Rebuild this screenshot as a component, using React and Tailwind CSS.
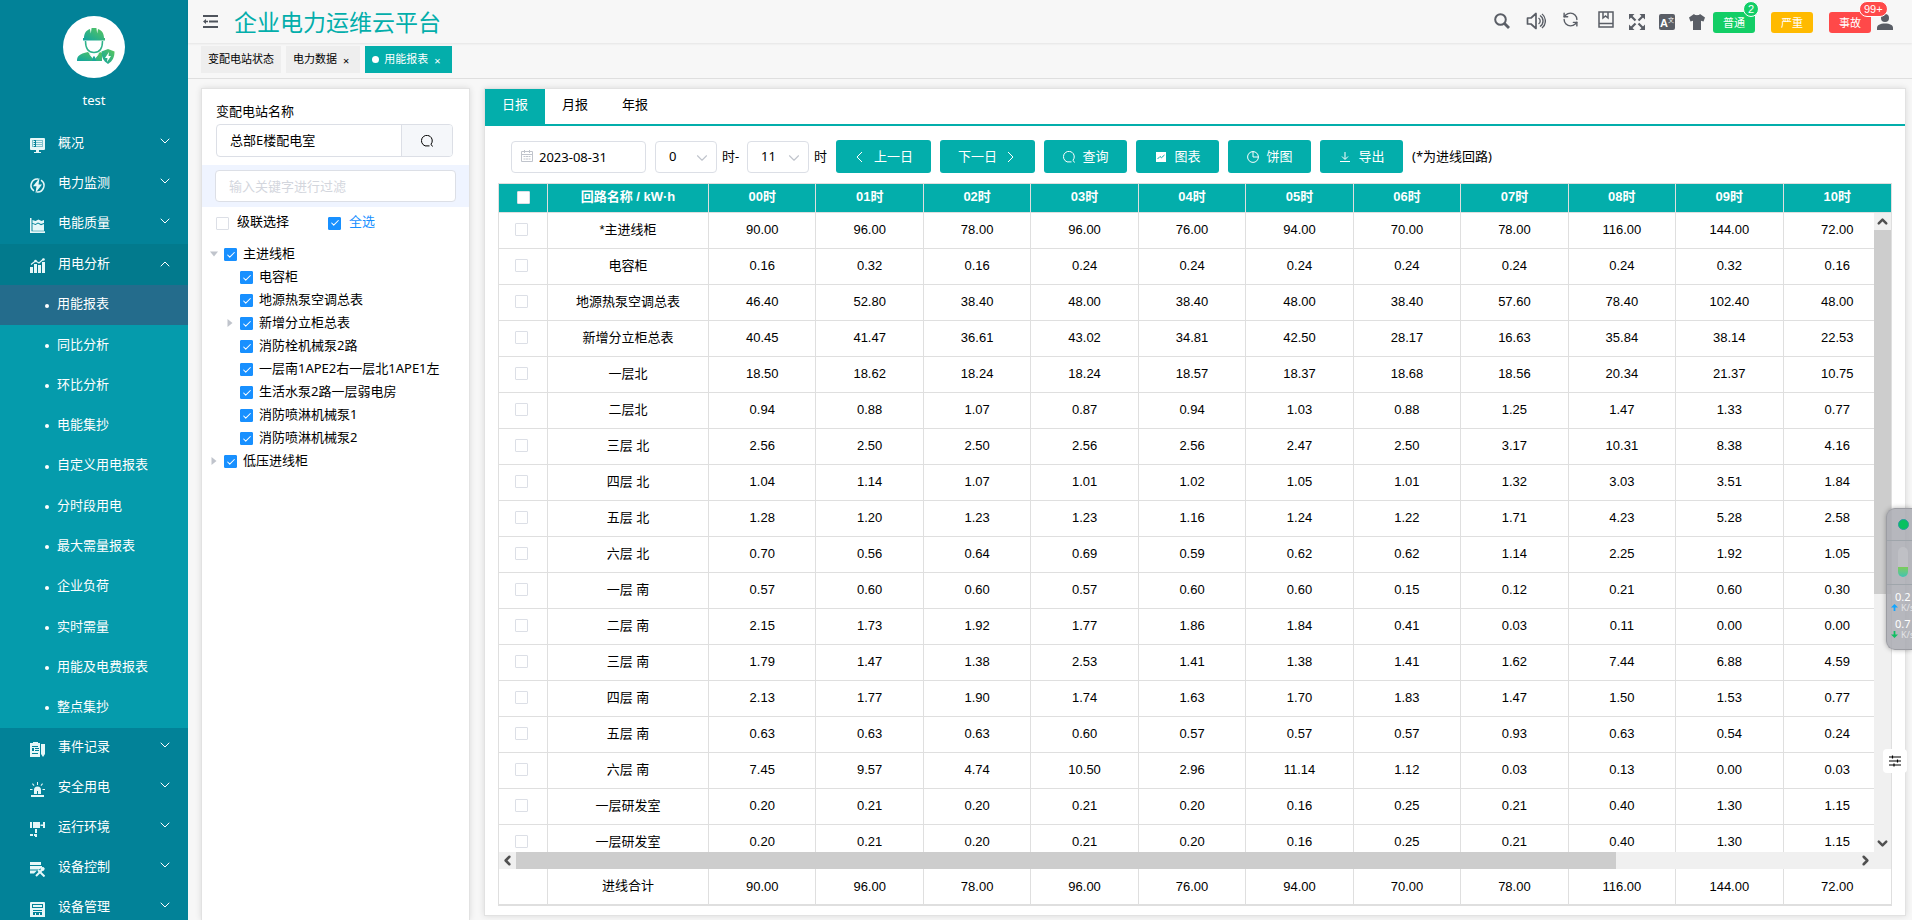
import React, { useState } from "react";
import { ChevronDown, ChevronUp, ChevronLeft, ChevronRight, RefreshCcw, Check } from "lucide-react";
import { FaTshirt } from "react-icons/fa";

const HOURS = ["00", "01", "02", "03", "04", "05", "06", "07", "08", "09", "10"];

const ROWS = [
  ["*主进线柜", "90.00 96.00 78.00 96.00 76.00 94.00 70.00 78.00 116.00 144.00 72.00"],
  ["电容柜", "0.16 0.32 0.16 0.24 0.24 0.24 0.24 0.24 0.24 0.32 0.16"],
  ["地源热泵空调总表", "46.40 52.80 38.40 48.00 38.40 48.00 38.40 57.60 78.40 102.40 48.00"],
  ["新增分立柜总表", "40.45 41.47 36.61 43.02 34.81 42.50 28.17 16.63 35.84 38.14 22.53"],
  ["一层北", "18.50 18.62 18.24 18.24 18.57 18.37 18.68 18.56 20.34 21.37 10.75"],
  ["二层北", "0.94 0.88 1.07 0.87 0.94 1.03 0.88 1.25 1.47 1.33 0.77"],
  ["三层 北", "2.56 2.50 2.50 2.56 2.56 2.47 2.50 3.17 10.31 8.38 4.16"],
  ["四层 北", "1.04 1.14 1.07 1.01 1.02 1.05 1.01 1.32 3.03 3.51 1.84"],
  ["五层 北", "1.28 1.20 1.23 1.23 1.16 1.24 1.22 1.71 4.23 5.28 2.58"],
  ["六层 北", "0.70 0.56 0.64 0.69 0.59 0.62 0.62 1.14 2.25 1.92 1.05"],
  ["一层 南", "0.57 0.60 0.60 0.57 0.60 0.60 0.15 0.12 0.21 0.60 0.30"],
  ["二层 南", "2.15 1.73 1.92 1.77 1.86 1.84 0.41 0.03 0.11 0.00 0.00"],
  ["三层 南", "1.79 1.47 1.38 2.53 1.41 1.38 1.41 1.62 7.44 6.88 4.59"],
  ["四层 南", "2.13 1.77 1.90 1.74 1.63 1.70 1.83 1.47 1.50 1.53 0.77"],
  ["五层 南", "0.63 0.63 0.63 0.60 0.57 0.57 0.57 0.93 0.63 0.54 0.24"],
  ["六层 南", "7.45 9.57 4.74 10.50 2.96 11.14 1.12 0.03 0.13 0.00 0.03"],
  ["一层研发室", "0.20 0.21 0.20 0.21 0.20 0.16 0.25 0.21 0.40 1.30 1.15"],
  ["一层研发室", "0.20 0.21 0.20 0.21 0.20 0.16 0.25 0.21 0.40 1.30 1.15"],
].map(([name, values]) => ({ name, values: values.split(" ") }));

const SUB_ITEMS = [
  "用能报表",
  "同比分析",
  "环比分析",
  "电能集抄",
  "自定义用电报表",
  "分时段用电",
  "最大需量报表",
  "企业负荷",
  "实时需量",
  "用能及电费报表",
  "整点集抄",
];

const TREE = [
  { label: "主进线柜", level: 0, arrow: "down" },
  { label: "电容柜", level: 1 },
  { label: "地源热泵空调总表", level: 1 },
  { label: "新增分立柜总表", level: 1, arrow: "right" },
  { label: "消防栓机械泵2路", level: 1 },
  { label: "一层南1APE2右一层北1APE1左", level: 1 },
  { label: "生活水泵2路一层弱电房", level: 1 },
  { label: "消防喷淋机械泵1", level: 1 },
  { label: "消防喷淋机械泵2", level: 1 },
  { label: "低压进线柜", level: 0, arrow: "right" },
];

/* ---------- menu icons ---------- */
const MenuIcon = ({ children }) => (
  <svg viewBox="0 0 15 15" className="mt-1 size-[15px] shrink-0 fill-[#e6f7f8]" aria-hidden="true">
    {children}
  </svg>
);

const OverviewIcon = () => (
  <MenuIcon>
    <path
      fillRule="evenodd"
      d="M1 0h13a1 1 0 0 1 1 1v10a1 1 0 0 1-1 1H9v2h2v1H4v-1h2v-2H1a1 1 0 0 1-1-1V1a1 1 0 0 1 1-1zM2 2v7h11V2zM3 3h2v1H3zM6 3h6v1H6zM3 5h2v1H3zM6 5h6v1H6zM3 7h2v1H3zM6 7h6v1H6z"
    />
    <path d="M2 2h2v7H2zM6 2h7v7H6z" opacity=".55" />
  </MenuIcon>
);

const PowerIcon = () => (
  <MenuIcon>
    <path
      d="M8.500 1.100A6.400 6.400 0 0 0 4 12.800M6.500 13.900A6.400 6.400 0 0 0 11 2.200"
      fill="none"
      stroke="#e6f7f8"
      strokeWidth="1.500"
    />
    <path d="M9.500 0 3 8.200h3.500L5.500 15 12 6.500H8.500z" />
  </MenuIcon>
);

const QualityIcon = () => (
  <MenuIcon>
    <path d="M0 0h1.500v13.200H15V15H0z" />
    <path d="M2.500 2l3 1 3-1.500 3 1.500L14 2v3l-3 1-3-1.500L5.500 6l-3-1z" />
    <path d="M2.500 5.800 5.500 7 8 5.500l3 1.700 3-1.200v6.700H2.500z" />
  </MenuIcon>
);

const AnalysisIcon = () => (
  <MenuIcon>
    <path d="M0 9h3v6H0zM4 6h3v9H4zM8 7h3v8H8zM12 4h3v11h-3z" />
    <path d="M1 6.500 5.500 3 9 5l4.500-4" fill="none" stroke="#e6f7f8" strokeWidth="1.200" />
    <circle cx="5.500" cy="3" r="1.300" />
    <circle cx="13.500" cy="1.500" r="1.300" />
  </MenuIcon>
);

const EventIcon = () => (
  <MenuIcon>
    <path
      fillRule="evenodd"
      d="M0 1h3V0h5v1h2v14H0zM2 4v1h6V4zM2 6v3h2V6zM5 6v1h4V6zM5 8v1h4V8zM2 11v1h6v-1z"
    />
    <path d="M11 2h4v10l-2 3-2-3z" />
  </MenuIcon>
);

const AlarmIcon = () => (
  <MenuIcon>
    <path d="M4 12V8a3.500 3.500 0 0 1 7 0v4zM1 13h13v2H1zM7 0h1v3H7zM2 2l.8-.7 1.700 2-.8.7zM13 2l-.8-.7-1.700 2 .8.7zM0 7h2.500v1H0zM12.500 7H15v1h-2.500z" />
    <path d="M7 9h1v3H7z" fill="#028298" />
  </MenuIcon>
);

const CameraIcon = () => (
  <MenuIcon>
    <path d="M0 0h2v6H0zM3 0h7v6H3zM10.500 2.500H13V0h2v6h-2V4h-2.500zM5 7h2v4H5zM0 12h3v2H0zM4 12h3v3H5v-1H4z" />
  </MenuIcon>
);

const ControlIcon = () => (
  <MenuIcon>
    <path d="M0 0h11v3H0zM0 4h12v1.500l-3 2H0zM0 8.500h7l-3 3H0z" />
    <path d="m6 14 8-8M8 8l6.500 6.500" stroke="#e6f7f8" strokeWidth="2" fill="none" />
    <circle cx="12.500" cy="7" r="2" />
  </MenuIcon>
);

const ManageIcon = () => (
  <MenuIcon>
    <path
      fillRule="evenodd"
      d="M1 0h13a1 1 0 0 1 1 1v14H0V1a1 1 0 0 1 1-1zM2 2v4h11V2zM3 8v1h9V8zM3 10v3h2v-2h1v2h3v-2h1v2h2v-3z"
    />
    <path d="M3 3h9v2H3z" />
  </MenuIcon>
);

const Avatar = () => (
  <svg viewBox="0 0 62 62" className="size-[62px]" aria-hidden="true">
    <defs>
      <linearGradient id="worker" x1="0" y1="1" x2="1" y2="0">
        <stop offset="0" stopColor="#10a3a0" />
        <stop offset="1" stopColor="#5cc85c" />
      </linearGradient>
    </defs>
    <circle cx="31" cy="31" r="31" fill="#fff" />
    <g fill="url(#worker)">
      <path d="M21 22c0-5 2.500-8 6-9l.8 4.500.8-5.500h4.800l.8 5.500.8-4.500c3.500 1 6 4 6 9h1v2.500H20V22z" />
      <path d="M14 45c0-5 2-7 11-9l6 7 6-7 2 1v8z" />
      <path d="m45 33 6.500 2.500c0 6-2 9.500-6.500 12.500-4.500-3-6.500-6.500-6.500-12.500z" />
    </g>
    <path d="M22.500 25c0 7 3 11.500 8.500 11.500S39.500 32 39.500 25" fill="#fff" stroke="#2eb38a" strokeWidth="1.500" />
    <path d="m26 38 5 6 5-6-5 2z" fill="#fff" />
    <path d="m30 41 1-1 1 1 1 4h-4z" fill="#1ba79a" />
    <path d="m46 36-4 6h2.500L44 46l4-6h-2.500z" fill="#fff" />
  </svg>
);

const SearchGlyph = () => (
  <svg viewBox="0 0 12 12" className="size-3" fill="none" stroke="currentColor" aria-hidden="true">
    <path d="M4 10.800A5.400 5.400 0 1 1 10 9.200L11.500 11.500M4 10.900h4.500" />
  </svg>
);

const TOP_ITEMS = [
  ["概况", OverviewIcon],
  ["电力监测", PowerIcon],
  ["电能质量", QualityIcon],
];

const BOTTOM_ITEMS = [
  ["事件记录", EventIcon],
  ["安全用电", AlarmIcon],
  ["运行环境", CameraIcon],
  ["设备控制", ControlIcon],
  ["设备管理", ManageIcon],
];

const MenuRow = ({ label, Icon, open }) => (
  <button
    className={`flex w-full items-center pr-[15px] pb-[2px] pl-[30px] text-left ${
      open ? "h-[41px] bg-[#027a8d]" : "h-10"
    }`}
  >
    <Icon />
    <span className="ml-[13px] flex-1">{label}</span>
    {open ? (
      <ChevronUp className="size-4" strokeWidth={1.5} />
    ) : (
      <ChevronDown className="mb-1 size-4" strokeWidth={1.5} />
    )}
  </button>
);

const Sidebar = () => {
  const [active, setActive] = useState("用能报表");

  return (
    <aside className="flex w-[188px] shrink-0 flex-col overflow-hidden bg-[#028298] text-[13px] text-white">
      <div className="flex flex-col items-center pt-4">
        <Avatar />
        <p className="mt-3 h-[34px] leading-5">test</p>
      </div>
      <nav>
        {TOP_ITEMS.map(([label, Icon]) => (
          <MenuRow key={label} label={label} Icon={Icon} />
        ))}
        <MenuRow label="用电分析" Icon={AnalysisIcon} open />
        <ul className="grid min-h-[443px] auto-rows-fr bg-[#059bac]">
          {SUB_ITEMS.map((item) => (
            <li key={item} className={item === active ? "bg-[#246c8c]" : ""}>
              <button
                onClick={() => setActive(item)}
                className="flex h-full w-full items-center pb-[2px] pl-[45px] text-left"
              >
                <span className="mt-[3px] mr-2 size-1 rounded-full bg-white"></span>
                {item}
              </button>
            </li>
          ))}
        </ul>
        {BOTTOM_ITEMS.map(([label, Icon]) => (
          <MenuRow key={label} label={label} Icon={Icon} />
        ))}
      </nav>
    </aside>
  );
};

const AlarmTag = ({ label, count, color }) => (
  <button className={`relative h-[21px] w-[42px] rounded-[3px] text-[11px] leading-[21px] text-white ${color}`}>
    {label}
    {count && (
      <span
        className={`absolute -top-[11px] left-[30px] flex h-4 min-w-4 items-center justify-center rounded-full border border-white px-1 font-['Liberation_Sans',sans-serif] text-[11px] leading-none ${color}`}
      >
        {count}
      </span>
    )}
  </button>
);

const Header = () => (
  <header className="flex h-[43px] shrink-0 items-center pr-[19px] pl-[15px] text-[#5a5e66] shadow-[0_1px_2px_rgba(0,0,0,0.08)]">
    <button aria-label="折叠菜单">
      <svg viewBox="0 0 15 13" className="size-[15px] fill-[#4f545c]">
        <path d="M0 0h15v2H0zM6 5.500h9v2H6zM0 11h15v2H0zM0 6.500 3 4v1.700h2v1.600H3V9z" />
      </svg>
    </button>
    <h1 className="ml-4 flex-1 text-[23px] leading-8 text-[#03aeab]">企业电力运维云平台</h1>
    <div className="flex items-center gap-4 pb-[2px]">
      <button aria-label="搜索">
        <svg viewBox="0 0 16 16" className="size-4" fill="none" stroke="currentColor" strokeWidth="2">
          <circle cx="6.500" cy="6.500" r="5.300" />
          <path d="m10.500 10.500 4.500 4.500" strokeWidth="2.800" />
        </svg>
      </button>
      <button aria-label="声音">
        <svg viewBox="0 0 20 18" className="h-[18px] w-5" fill="none" stroke="currentColor" strokeWidth="1.700">
          <path d="M1.500 6H5l5-4.500v15L5 12H1.500z" strokeLinejoin="round" />
          <path d="M12.500 6a3.500 3.500 0 0 1 0 6M14 3.500a6.500 6.500 0 0 1 0 11M16 2a9 9 0 0 1 0 14" strokeWidth="1.400" />
        </svg>
      </button>
      <button aria-label="刷新" className="mb-[2px]">
        <RefreshCcw className="size-[17px]" strokeWidth={2} />
      </button>
      <button aria-label="手册" className="mb-[2px] pl-[3px]">
        <svg viewBox="0 0 16 17" className="h-[17px] w-4" fill="none" stroke="currentColor" strokeWidth="1.500">
          <path d="M1 1h14v15H1zM1 12.500h14M5 1v6l2.500-2L10 7V1" />
        </svg>
      </button>
    </div>
    <div className="ml-[15px] flex items-center gap-[14px]">
      <button aria-label="全屏">
        <svg viewBox="0 0 16 16" className="size-4 fill-current stroke-current">
          <path
            d="M0 0h5.500L0 5.500zM16 0v5.500L10.500 0zM0 16v-5.500L5.500 16zM16 16h-5.500l5.500-5.500z"
            stroke="none"
          />
          <path d="m2 2 4.500 4.500M14 2 9.500 6.500M2 14l4.500-4.500M14 14 9.500 9.500" strokeWidth="2.200" />
        </svg>
      </button>
      <button
        aria-label="语言"
        className="flex size-4 justify-center rounded-[2px] bg-[#5a5e66] leading-none text-white"
      >
        <span className="pt-1 font-['Liberation_Sans',sans-serif] text-[11px] leading-[11px] font-bold">A</span>
        <span className="pt-[2px] text-[6px] leading-[8px]">文</span>
      </button>
      <button aria-label="主题">
        <svg viewBox="0 0 16 16" className="size-4 fill-current">
          <path d="M5 0c.8 1.600 5.200 1.600 6 0l5 3.500-1.500 4-2.500-.8V16H4V6.700l-2.500.8L0 3.500z" />
        </svg>
      </button>
    </div>
    <div className="mt-[2px] ml-2 flex items-center gap-4">
      <AlarmTag label="普通" count="2" color="bg-[#13ce66]" />
      <AlarmTag label="严重" color="bg-[#ffba00]" />
      <AlarmTag label="事故" count="99+" color="bg-[#ff4949]" />
    </div>
    <button aria-label="用户" className="ml-[6px]">
      <svg viewBox="0 0 16 16" className="size-4 fill-current">
        <circle cx="8" cy="4" r="4" />
        <path d="M0 16v-2c0-3 3-4.500 8-4.500s8 1.500 8 4.500v2z" />
      </svg>
    </button>
  </header>
);

const Tag = ({ label, active, closable }) => (
  <div
    className={`flex h-[27px] items-center px-[7px] text-[11px] ${
      active ? "bg-[#03aeab] text-white" : "bg-[#eeeeee] text-black"
    }`}
  >
    {active && <span className="mr-[5px] size-[7px] rounded-full bg-white"></span>}
    <a href="#tag">{label}</a>
    {closable && (
      <button className="mr-1 ml-[6px] pt-[2px] leading-none" aria-label={`关闭${label}`}>
        ×
      </button>
    )}
  </div>
);

const Checkbox = ({ checked, ...rest }) => {
  const [on, setOn] = useState(Boolean(checked));
  return (
    <span className="inline-grid shrink-0 place-items-center">
      <input
        type="checkbox"
        checked={on}
        onChange={() => setOn(!on)}
        className="col-start-1 row-start-1 size-[13px] appearance-none rounded-[1px] border border-[#dcdfe6] bg-white checked:border-[#1890ff] checked:bg-[#1890ff]"
        {...rest}
      />
      {on && (
        <Check className="pointer-events-none col-start-1 row-start-1 size-[10px] text-white" strokeWidth={2.5} />
      )}
    </span>
  );
};

const TreeArrow = ({ dir }) => (
  <svg viewBox="0 0 8 8" className="size-2 shrink-0 fill-[#c0c4cc]" aria-hidden="true">
    {dir === "down" && <path d="M0 1.500h8L4 6.500z" />}
    {dir === "right" && <path d="M1.500 0v8l5-4z" />}
  </svg>
);

const CircuitPanel = () => (
  <section className="w-[269px] shrink-0 border border-b-0 border-[#e2e2e2] bg-white text-[13px] shadow-[0_0_6px_rgba(0,0,0,0.12)]">
    <div className="px-[14px] pt-3 pb-2">
      <label htmlFor="station" className="block h-[23px] leading-5">
        变配电站名称
      </label>
      <div className="mr-[2px] flex h-[33px] overflow-hidden rounded-[4px] border border-[#dcdfe6]">
        <input id="station" defaultValue="总部E楼配电室" className="min-w-0 flex-1 px-[13px] outline-none" />
        <button
          aria-label="选择变配电站"
          className="flex w-[51px] items-center justify-center border-l border-[#dcdfe6] bg-[#f5f7fa]"
        >
          <SearchGlyph />
        </button>
      </div>
    </div>
    <div className="bg-[#eff4ff] px-[13px] py-[5px]">
      <input
        aria-label="过滤"
        placeholder="输入关键字进行过滤"
        className="h-8 w-full rounded-[4px] border border-[#dcdfe6] bg-white px-[13px] outline-none placeholder:text-[#d3d6dd]"
      />
    </div>
    <div className="flex h-8 items-center px-[14px] pb-[2px]">
      <label className="flex w-[112px] items-center gap-2">
        <span className="mt-[2px] flex">
          <Checkbox />
        </span>
        <span>级联选择</span>
      </label>
      <label className="flex items-center gap-2 text-[#1890ff]">
        <span className="mt-[2px] flex">
          <Checkbox checked />
        </span>
        <span>全选</span>
      </label>
    </div>
    <ul className="pt-[3px]">
      {TREE.map((node) => (
        <li key={node.label} className={node.level ? "pl-6" : "pl-2"}>
          <label className="flex h-[23px] items-center">
            <TreeArrow dir={node.arrow} />
            <span className="mt-[2px] mr-[6px] ml-[6px] flex">
              <Checkbox checked />
            </span>
            <span className="leading-[23px] whitespace-nowrap">{node.label}</span>
          </label>
        </li>
      ))}
    </ul>
  </section>
);

const HourSelect = ({ value, label }) => (
  <div className="relative h-8 w-[62px]">
    <select
      aria-label={label}
      defaultValue={value}
      className="h-full w-full appearance-none rounded-[4px] border border-[#dcdfe6] bg-white pl-[13px] outline-none"
    >
      <option>{value}</option>
    </select>
    <ChevronDown
      className="pointer-events-none absolute top-2 right-[6px] size-[18px] text-[#c0c4cc]"
      strokeWidth={1.5}
    />
  </div>
);

const ToolButton = ({ children }) => (
  <button className="flex h-[33px] min-w-[83px] items-center justify-center gap-2 rounded-[3px] bg-[#03aeab] px-[18px] whitespace-nowrap text-white">
    {children}
  </button>
);

const Toolbar = () => (
  <div className="flex items-center gap-[9px] pt-[14px] pb-[10px] pl-[26px]">
    <div className="relative h-8 w-[135px]">
      <svg
        viewBox="0 0 12 12"
        className="absolute top-[9px] left-[10px] size-3"
        fill="none"
        stroke="#c0c4cc"
        aria-hidden="true"
      >
        <path d="M.5 1.500h11v10H.5zM.5 4.500h11M3.500 0v3M8.500 0v3M2.500 6.500h2M5 6.500h2M7.500 6.500h2M2.500 9h2M5 9h2M7.500 9h2" />
      </svg>
      <input
        aria-label="日期"
        defaultValue="2023-08-31"
        className="h-full w-full rounded-[4px] border border-[#dcdfe6] pl-[27px] outline-none"
      />
    </div>
    <HourSelect value="0" label="开始时" />
    <span className="-ml-1 w-4 whitespace-nowrap">时-</span>
    <HourSelect value="11" label="结束时" />
    <span className="-ml-1">时</span>
    <ToolButton>
      <svg viewBox="0 0 12 12" className="size-3" fill="none" stroke="currentColor" aria-hidden="true">
        <path d="M8 1 3 6l5 5" />
      </svg>
      上一日
    </ToolButton>
    <ToolButton>
      下一日
      <svg viewBox="0 0 12 12" className="size-3" fill="none" stroke="currentColor" aria-hidden="true">
        <path d="m3 1 5 5-5 5" />
      </svg>
    </ToolButton>
    <ToolButton>
      <SearchGlyph /> 查询
    </ToolButton>
    <ToolButton>
      <svg viewBox="0 0 12 12" className="size-3" aria-hidden="true">
        <path d="M1 1h10v10H1z" fill="#fff" />
        <path d="m2.500 8 2.500-2.500 1.500 1.200L9.500 4" fill="none" stroke="#03aeab" />
      </svg>
      图表
    </ToolButton>
    <ToolButton>
      <svg viewBox="0 0 12 12" className="size-3" fill="none" stroke="currentColor" aria-hidden="true">
        <circle cx="6" cy="6" r="5.400" />
        <path d="M6 .5v5.500h5.500" />
      </svg>
      饼图
    </ToolButton>
    <ToolButton>
      <svg viewBox="0 0 12 12" className="size-3" fill="none" stroke="currentColor" aria-hidden="true">
        <path d="M6 1v7M3 5.500l3 3 3-3M1 10.500h10" />
      </svg>
      导出
    </ToolButton>
    <span className="whitespace-nowrap">(*为进线回路)</span>
  </div>
);

const Columns = () => (
  <colgroup>
    <col className="w-[49px]" />
    <col className="w-[161px]" />
    {HOURS.map((hour) => (
      <col key={hour} />
    ))}
  </colgroup>
);

const cell = "border-r border-b border-[#dfdfdf] p-0 pb-[2px] last:border-r-0";

const ReportTable = () => (
  <div className="mx-[13px] mb-[9px] flex min-h-0 flex-1 flex-col border border-b-2 border-[#dfdfdf] text-center font-['Liberation_Sans','Noto_Sans_CJK_SC',sans-serif] text-[13px]">
    <table className="w-full shrink-0 table-fixed border-separate border-spacing-0">
      <Columns />
      <thead className="bg-[#03aeab] text-white">
        <tr className="h-[29px]">
          <th className={cell}>
            <span className="flex justify-center">
              <Checkbox aria-label="全选回路" />
            </span>
          </th>
          <th className={cell}>回路名称 / kW·h</th>
          {HOURS.map((hour) => (
            <th key={hour} className={cell}>
              {hour}时
            </th>
          ))}
        </tr>
      </thead>
    </table>

    <div className="relative min-h-0 flex-1 overflow-hidden">
      <table className="w-full table-fixed border-separate border-spacing-0">
        <Columns />
        <tbody>
          {ROWS.map((row, index) => (
            <tr key={index} className="h-9">
              <td className={cell}>
                <span className="flex justify-center pr-1">
                  <Checkbox aria-label={row.name} />
                </span>
              </td>
              <td className={cell}>{row.name}</td>
              {row.values.map((value, i) => (
                <td key={i} className={cell}>
                  {value}
                </td>
              ))}
            </tr>
          ))}
        </tbody>
      </table>
      <div className="absolute inset-y-0 right-0 flex w-[17px] flex-col items-center bg-[#f0f0f0] text-[#505050]">
        <ChevronUp className="h-[17px] w-[15px] shrink-0" strokeWidth={4} />
        <div className="h-[57%] w-full bg-[#cdcdcd]"></div>
        <ChevronDown className="mt-auto h-[17px] w-[15px] shrink-0" strokeWidth={4} />
      </div>
    </div>

    <div className="flex h-[17px] shrink-0 items-center bg-[#f0f0f0] pr-[17px] text-[#505050]">
      <ChevronLeft className="h-[15px] w-[17px] shrink-0" strokeWidth={4} />
      <div className="h-full w-[80%] bg-[#cdcdcd]"></div>
      <ChevronRight className="ml-auto h-[15px] w-[17px] shrink-0" strokeWidth={4} />
    </div>

    <table className="w-full shrink-0 table-fixed border-separate border-spacing-0">
      <Columns />
      <tbody>
        <tr className="h-[35px]">
          <td className="border-r border-[#dfdfdf] p-0"></td>
          <td className="border-r border-[#dfdfdf] p-0 pb-[2px]">进线合计</td>
          {ROWS[0].values.map((value, i) => (
            <td key={i} className="border-r border-[#dfdfdf] p-0 last:border-r-0">
              {value}
            </td>
          ))}
        </tr>
      </tbody>
    </table>
  </div>
);

const ReportPanel = () => {
  const [tab, setTab] = useState("日报");

  return (
    <section className="mb-1 flex min-w-0 flex-1 flex-col border border-[#e2e2e2] bg-white text-[13px] shadow-[0_0_6px_rgba(0,0,0,0.12)]">
      <div className="flex h-[37px] shrink-0 border-b-2 border-[#03aeab]" role="tablist">
        {["日报", "月报", "年报"].map((name) => (
          <button
            key={name}
            role="tab"
            aria-selected={tab === name}
            onClick={() => setTab(name)}
            className={`w-[60px] pb-[3px] ${tab === name ? "bg-[#03aeab] text-white" : ""}`}
          >
            {name}
          </button>
        ))}
      </div>
      <Toolbar />
      <ReportTable />
    </section>
  );
};

/* desktop gadget docked to the right edge */
const NetGadget = () => (
  <div className="absolute top-[508px] right-0 h-[142px] w-[26px] overflow-hidden rounded-l-[9px] border border-r-0 border-[#9c9da3] bg-[#a9aab1]/85 text-[11px] text-white shadow-[0_0_5px_rgba(0,0,0,0.3)]">
    <div className="flex h-8 items-center border-b border-[#9fa5ab] pl-[11px]">
      <span className="size-[11px] rounded-full border border-[#2c9aa0] bg-[#07c160]"></span>
    </div>
    <div className="flex h-11 items-center border-b border-[#9fa5ab] pb-[2px] pl-[11px]">
      <span className="flex h-[30px] w-[10px] items-end overflow-hidden rounded-full bg-[#bfc0c5]">
        <span className="h-[10px] w-full bg-linear-to-b from-[#7ccb58] to-[#3fc3b0]"></span>
      </span>
    </div>
    {[
      ["0.2", "M4 0 8 4H5v4H3V4H0z", "fill-[#12a5ff]"],
      ["0.7", "M4 8 0 4h3V0h2v4h3z", "fill-[#0fbf62]"],
    ].map(([rate, path, fill]) => (
      <div key={rate} className="h-[27px] pt-[6px] pl-1 leading-[11px]">
        <p className="pl-1">{rate}</p>
        <p className="flex items-center gap-[3px] text-[9px] whitespace-nowrap text-[#e3e3e6]">
          <svg viewBox="0 0 8 8" className={`size-[7px] shrink-0 ${fill}`} aria-hidden="true">
            <path d={path} />
          </svg>
          K/s
        </p>
      </div>
    ))}
  </div>
);

const SettingsButton = () => (
  <button
    aria-label="设置"
    className="absolute top-[749px] right-[5px] flex size-6 items-center justify-center rounded-[4px] bg-white"
  >
    <svg viewBox="0 0 12 12" className="size-3" fill="none" stroke="#000" strokeWidth="1.200">
      <path d="M0 2h12M0 6h12M0 10h12M3.500.5v3M8.500 4.500v3M5 8.500v3" />
    </svg>
  </button>
);

const App = () => (
  <div className="relative flex h-screen overflow-hidden bg-[#f5f5f5] font-['Noto_Sans','Noto_Sans_CJK_SC',sans-serif] text-black">
    <Sidebar />
    <div className="flex min-w-0 flex-1 flex-col bg-[#f7f7f7]">
      <Header />
      <div className="flex h-9 shrink-0 items-center gap-[5px] border-b border-[#dfdfdf] pb-[2px] pl-[13px]">
        <Tag label="变配电站状态" />
        <Tag label="电力数据" closable />
        <Tag label="用能报表" active closable />
      </div>
      <main className="flex min-h-0 flex-1 gap-[14px] pt-[9px] pr-[6px] pl-[13px]">
        <CircuitPanel />
        <ReportPanel />
      </main>
    </div>
    <NetGadget />
    <SettingsButton />
  </div>
);

export default App;
